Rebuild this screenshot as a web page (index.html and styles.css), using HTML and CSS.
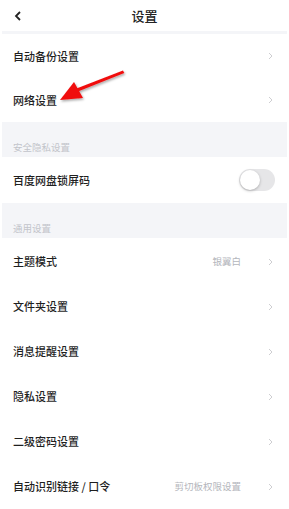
FILE: index.html
```html
<!DOCTYPE html>
<html lang="zh">
<head>
<meta charset="utf-8">
<link rel="stylesheet" href="styles.css">
</head>
<body>
<div class="page">
  <header class="nav">
    <svg class="back" width="8" height="10" viewBox="0 0 8 10"><path d="M6 1 L2 5 L6 9" fill="none" stroke="#222" stroke-width="1.8"/></svg>
    <div class="title">设置</div>
  </header>
  <div class="rule"></div>
  <div class="group">
    <div class="row"><span class="label">自动备份设置</span><span class="right"><svg class="chev" width="5" height="8" viewBox="0 0 5 8"><path d="M1 1 L4 4 L1 7" fill="none" stroke="#c8c8cc" stroke-width="0.9"/></svg></span></div>
    <div class="row"><span class="label">网络设置</span><span class="right"><svg class="chev" width="5" height="8" viewBox="0 0 5 8"><path d="M1 1 L4 4 L1 7" fill="none" stroke="#c8c8cc" stroke-width="0.9"/></svg></span></div>
  </div>
  <div class="section">安全隐私设置</div>
  <div class="group">
    <div class="row tall"><span class="label">百度网盘锁屏码</span><span class="toggle"><span class="knob"></span></span></div>
  </div>
  <div class="section">通用设置</div>
  <div class="group">
    <div class="row r45"><span class="label">主题模式</span><span class="right"><span class="value">银翼白</span><svg class="chev" width="5" height="8" viewBox="0 0 5 8"><path d="M1 1 L4 4 L1 7" fill="none" stroke="#c8c8cc" stroke-width="0.9"/></svg></span></div>
    <div class="row r45"><span class="label">文件夹设置</span><span class="right"><svg class="chev" width="5" height="8" viewBox="0 0 5 8"><path d="M1 1 L4 4 L1 7" fill="none" stroke="#c8c8cc" stroke-width="0.9"/></svg></span></div>
    <div class="row r45"><span class="label">消息提醒设置</span><span class="right"><svg class="chev" width="5" height="8" viewBox="0 0 5 8"><path d="M1 1 L4 4 L1 7" fill="none" stroke="#c8c8cc" stroke-width="0.9"/></svg></span></div>
    <div class="row r45"><span class="label">隐私设置</span><span class="right"><svg class="chev" width="5" height="8" viewBox="0 0 5 8"><path d="M1 1 L4 4 L1 7" fill="none" stroke="#c8c8cc" stroke-width="0.9"/></svg></span></div>
    <div class="row r45"><span class="label">二级密码设置</span><span class="right"><svg class="chev" width="5" height="8" viewBox="0 0 5 8"><path d="M1 1 L4 4 L1 7" fill="none" stroke="#c8c8cc" stroke-width="0.9"/></svg></span></div>
    <div class="row r45"><span class="label">自动识别链接 / 口令</span><span class="right"><span class="value">剪切板权限设置</span><svg class="chev" width="5" height="8" viewBox="0 0 5 8"><path d="M1 1 L4 4 L1 7" fill="none" stroke="#c8c8cc" stroke-width="0.9"/></svg></span></div>
  </div>
  <svg class="arrow" width="80" height="40" viewBox="0 0 80 40">
    <defs>
      <filter id="sh" x="-20%" y="-40%" width="140%" height="180%">
        <feDropShadow dx="1" dy="1.5" stdDeviation="1.2" flood-color="#000" flood-opacity="0.35"/>
      </filter>
    </defs>
    <g filter="url(#sh)">
      <path d="M69 3.5 L70.3 6 L24 24.5 L22.5 21.5 Z" fill="#f01010"/>
      <path d="M6 33 L20 15 L29 31 Z" fill="#f01010"/>
    </g>
  </svg>
</div>
</body>
</html>
```
FILE: styles.css
```css
html, body {
  margin: 0;
  padding: 0;
  background: #fff;
}
body {
  font-family: "Noto Sans CJK SC", "Noto Sans", sans-serif;
  color: #222;
}
.page {
  position: relative;
  width: 289px;
  height: 509px;
  overflow: hidden;
  padding: 0 2px;
  box-sizing: border-box;
}
.nav {
  height: 31px;
  display: flex;
  align-items: center;
  justify-content: center;
  position: relative;
}
.back {
  position: absolute;
  left: 12px;
  top: 11px;
}
.title {
  font-size: 13px;
  font-weight: 500;
  color: #222;
  line-height: 1;
}
.rule {
  height: 3px;
  background: #f4f5f8;
}
.group {
  background: #fff;
}
.row {
  height: 44px;
  display: flex;
  align-items: center;
  justify-content: space-between;
  padding: 0 14px 0 11px;
}
.row.tall {
  height: 46px;
  padding-right: 12px;
}
.row.r45 {
  height: 45px;
}
.label {
  font-size: 11px;
  font-weight: 500;
  color: #1f1f1f;
  line-height: 1;
  white-space: pre;
}
.right {
  display: flex;
  align-items: center;
}
.value {
  font-size: 9.5px;
  color: #b4b6bc;
  margin-right: 27px;
  line-height: 1;
}
.chev {
  display: block;
}
.section {
  height: 35px;
  background: #f4f5f8;
  box-sizing: border-box;
  padding: 21px 0 0 11px;
  font-size: 9.5px;
  color: #c2c4ca;
  line-height: 1;
}
.section + .group .r45:first-child {
  margin-top: 1px;
}
.toggle {
  width: 36px;
  height: 22px;
  border-radius: 11px;
  background: #e6e6e8;
  position: relative;
  display: block;
}
.knob {
  position: absolute;
  left: 1px;
  top: 1px;
  width: 20px;
  height: 20px;
  border-radius: 50%;
  background: #fff;
  box-shadow: 0 1px 3px rgba(0,0,0,0.25);
}
.arrow {
  position: absolute;
  left: 54px;
  top: 67px;
}
```
